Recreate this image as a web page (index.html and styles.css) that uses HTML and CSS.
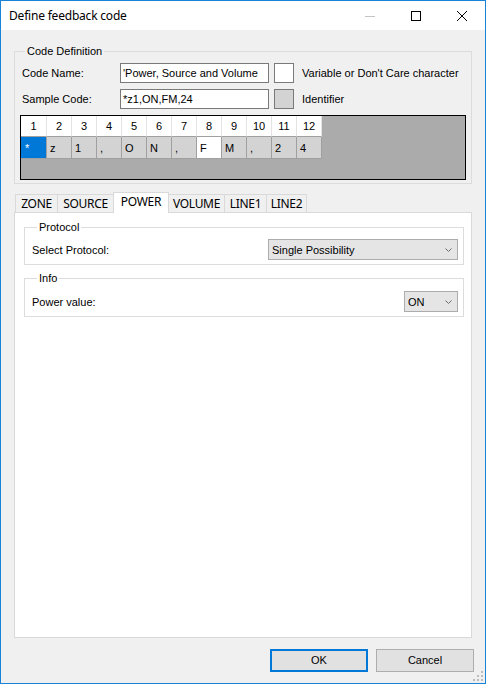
FILE: index.html
```html
<!DOCTYPE html>
<html lang="en">

<head>
    <meta charset="UTF-8">
    <meta name="viewport" content="width=device-width, initial-scale=1.0">
    <title>Define feedback code</title>

    <link rel="stylesheet" href="styles.css">
</head>

<body>
    <div class="window">
        <div class="titlebar">
            <span class="title">Define feedback code</span>
            <div class="caption_buttons">
                <span class="cap_btn">
                    <svg width="10" height="10" viewBox="0 0 10 10"><line x1="0" y1="5.5" x2="10" y2="5.5" stroke="#c4c4c4" stroke-width="1"/></svg>
                </span>
                <span class="cap_btn">
                    <svg width="10" height="10" viewBox="0 0 10 10"><rect x="0.5" y="0.5" width="9" height="9" fill="none" stroke="#000" stroke-width="1"/></svg>
                </span>
                <span class="cap_btn">
                    <svg width="10" height="10" viewBox="0 0 10 10"><path d="M0 0 L10 10 M10 0 L0 10" stroke="#000" stroke-width="1"/></svg>
                </span>
            </div>
        </div>

        <div class="content">
            <fieldset class="group code_def">
                <legend>Code Definition</legend>
                <div class="field_row first">
                    <span class="field_label">Code Name:</span>
                    <div class="textbox">'Power, Source and Volume</div>
                    <span class="swatch"></span>
                    <span class="swatch_label">Variable or Don't Care character</span>
                </div>
                <div class="field_row">
                    <span class="field_label">Sample Code:</span>
                    <div class="textbox">*z1,ON,FM,24</div>
                    <span class="swatch ident"></span>
                    <span class="swatch_label">Identifier</span>
                </div>

                <div class="code_grid">
                    <div class="grid_head">
                        <span>1</span><span>2</span><span>3</span><span>4</span><span>5</span><span>6</span>
                        <span>7</span><span>8</span><span>9</span><span>10</span><span>11</span><span>12</span>
                    </div>
                    <div class="grid_row">
                        <span class="sel">*</span><span>z</span><span>1</span><span>,</span><span>O</span><span>N</span>
                        <span>,</span><span class="var">F</span><span>M</span><span>,</span><span>2</span><span>4</span>
                    </div>
                </div>
            </fieldset>

            <div class="tabs">
                <span class="tab" style="width: 43px">ZONE</span>
                <span class="tab" style="width: 57px">SOURCE</span>
                <span class="tab active" style="width: 56px">POWER</span>
                <span class="tab" style="width: 57px">VOLUME</span>
                <span class="tab" style="width: 43px">LINE1</span>
                <span class="tab" style="width: 41px">LINE2</span>
            </div>
            <div class="tab_page">
                <fieldset class="group inner">
                    <legend>Protocol</legend>
                    <div class="combo_row">
                        <span class="field_label">Select Protocol:</span>
                        <div class="combo wide">
                            <span>Single Possibility</span>
                            <svg width="7" height="4" viewBox="0 0 7 4"><polyline points="0.5,0.5 3.5,3.5 6.5,0.5" fill="none" stroke="#6d6d6d" stroke-width="1"/></svg>
                        </div>
                    </div>
                </fieldset>
                <fieldset class="group inner info">
                    <legend>Info</legend>
                    <div class="combo_row">
                        <span class="field_label">Power value:</span>
                        <div class="combo small">
                            <span>ON</span>
                            <svg width="7" height="4" viewBox="0 0 7 4"><polyline points="0.5,0.5 3.5,3.5 6.5,0.5" fill="none" stroke="#6d6d6d" stroke-width="1"/></svg>
                        </div>
                    </div>
                </fieldset>
            </div>
        </div>

        <div class="footer">
            <button class="btn default">OK</button>
            <button class="btn">Cancel</button>
        </div>

        <svg class="grip" width="10" height="10" viewBox="0 0 10 10">
            <rect x="8" y="0" width="2" height="2" fill="#bcbcbc"/>
            <rect x="4" y="4" width="2" height="2" fill="#bcbcbc"/>
            <rect x="8" y="4" width="2" height="2" fill="#bcbcbc"/>
            <rect x="0" y="8" width="2" height="2" fill="#bcbcbc"/>
            <rect x="4" y="8" width="2" height="2" fill="#bcbcbc"/>
            <rect x="8" y="8" width="2" height="2" fill="#bcbcbc"/>
        </svg>
    </div>
</body>

</html>
```

FILE: styles.css
```css
body {
    margin: 0;
    background-color: #ffffff;
    font-family: "Liberation Sans", Arial, sans-serif;
    font-size: 11px;
    color: #000;
}

.window {
    position: relative;
    box-sizing: border-box;
    width: 486px;
    height: 684px;
    border: 1px solid #1883d7;
    background-color: #f0f0f0;
    display: flex;
    flex-direction: column;
}

/* title bar */
.titlebar {
    height: 29px;
    flex: none;
    background-color: #fff;
    display: flex;
    align-items: center;
}

.title {
    flex: 1;
    padding-left: 8px;
    font-family: "Noto Sans", sans-serif;
    font-size: 12px;
    letter-spacing: -0.2px;
    color: #000;
}

.caption_buttons {
    display: flex;
    height: 100%;
}

.cap_btn {
    width: 46px;
    display: flex;
    align-items: center;
    justify-content: center;
}

.cap_btn svg {
    display: block;
}

/* main area */
.content {
    flex: 1;
    display: flex;
    flex-direction: column;
    padding: 0 13px;
    min-height: 0;
}

.group {
    margin: 0;
    border: 1px solid #dcdcdc;
    min-width: 0;
}

.group legend {
    margin-left: 5px;
    padding: 0 2px;
    line-height: 13px;
}

.code_def {
    margin-top: 15px;
    padding: 0 5px 3px 5px;
}

.field_row {
    display: flex;
    align-items: center;
    height: 20px;
    margin-top: 6px;
}

.field_row.first {
    margin-top: 5px;
}

.field_label {
    width: 98px;
    margin-left: 2px;
}

.textbox {
    box-sizing: border-box;
    width: 149px;
    height: 20px;
    border: 1px solid #7a7a7a;
    background-color: #fff;
    padding: 0 2px;
    line-height: 18px;
    white-space: nowrap;
    overflow: hidden;
}

.swatch {
    box-sizing: border-box;
    width: 20px;
    height: 20px;
    margin-left: 5px;
    border: 1px solid #7a7a7a;
    background-color: #fff;
}

.swatch.ident {
    background-color: #d3d3d3;
}

.swatch_label {
    margin-left: 8px;
}

/* code characters grid */
.code_grid {
    margin-top: 6px;
    height: 65px;
    box-sizing: border-box;
    border: 1px solid #000;
    background-color: #ababab;
}

.grid_head,
.grid_row {
    display: grid;
    grid-template-columns: 26px repeat(11, 25px);
}

.grid_head span {
    box-sizing: border-box;
    height: 21px;
    background-color: #fff;
    border-right: 1px solid #e3e3e3;
    border-bottom: 1px solid #a0a0a0;
    text-align: center;
    line-height: 20px;
}

.grid_row span {
    box-sizing: border-box;
    height: 22px;
    background-color: #d3d3d3;
    border-right: 1px solid #a0a0a0;
    border-bottom: 1px solid #a0a0a0;
    padding-left: 3px;
    line-height: 22px;
}

.grid_row span.sel {
    background-color: #0078d7;
    color: #fff;
    padding-left: 4px;
}

.grid_row span.var {
    background-color: #fff;
}

/* tabs */
.tabs {
    display: flex;
    align-items: flex-end;
    height: 20px;
    margin-top: 8px;
    margin-left: 1px;
}

.tab {
    box-sizing: border-box;
    height: 18px;
    margin-right: -1px;
    border: 1px solid #d9d9d9;
    border-bottom: none;
    background-color: #f0f0f0;
    font-family: "Noto Sans", sans-serif;
    font-size: 12px;
    letter-spacing: -0.3px;
    line-height: 18px;
    text-align: center;
}

.tab.active {
    position: relative;
    z-index: 1;
    height: 21px;
    margin-bottom: -1px;
    background-color: #fff;
    line-height: 18px;
}

.tab_page {
    flex: 1;
    border: 1px solid #d9d9d9;
    background-color: #fff;
    padding: 8px 7px 0 9px;
}

.inner {
    padding: 0 5px 4px 7px;
}

.inner.info {
    margin-top: 7px;
}

.combo_row {
    display: flex;
    align-items: center;
    justify-content: space-between;
    margin-top: 5px;
}

.info .combo_row {
    margin-top: 6px;
}

.combo_row .field_label {
    margin-left: 0;
}

.combo {
    box-sizing: border-box;
    height: 21px;
    border: 1px solid #acacac;
    background-color: #e5e5e5;
    display: flex;
    align-items: center;
    justify-content: space-between;
    padding: 0 5px 0 3px;
}

.combo svg {
    display: block;
}

.combo.wide {
    width: 190px;
}

.combo.small {
    width: 54px;
}

/* dialog buttons */
.footer {
    flex: none;
    height: 45px;
    box-sizing: border-box;
    padding: 11px 11px 0 0;
    display: flex;
    justify-content: flex-end;
    gap: 8px;
}

.btn {
    box-sizing: border-box;
    width: 98px;
    height: 23px;
    margin: 0;
    border: 1px solid #adadad;
    background-color: #e1e1e1;
    font-family: "Liberation Sans", Arial, sans-serif;
    font-size: 11px;
    color: #000;
    padding: 0 0 2px 0;
}

.btn.default {
    border: 2px solid #0078d7;
}

.grip {
    position: absolute;
    right: 2px;
    bottom: 2px;
}
```
